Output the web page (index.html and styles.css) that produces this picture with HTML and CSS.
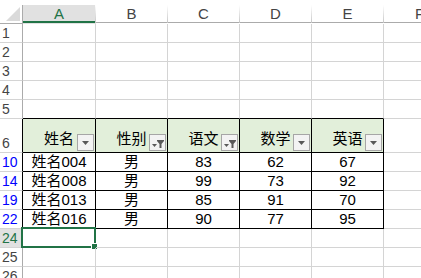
FILE: index.html
```html
<!DOCTYPE html>
<html lang="zh-CN">
<head>
    <meta charset="UTF-8">
    <title>工作表</title>
    <link rel="stylesheet" href="styles.css">
</head>
<body>
    <div class="sheet">
        <div class="top-strip"></div>

        <div class="row head">
            <div class="corner"><span class="tri"></span></div>
            <div class="col active">A</div>
            <div class="col">B</div>
            <div class="col">C</div>
            <div class="col">D</div>
            <div class="col">E</div>
            <div class="col">F</div>
        </div>

        <div class="row"><div class="num">1</div><div class="cell"></div><div class="cell"></div><div class="cell"></div><div class="cell"></div><div class="cell"></div><div class="cell"></div></div>
        <div class="row"><div class="num">2</div><div class="cell"></div><div class="cell"></div><div class="cell"></div><div class="cell"></div><div class="cell"></div><div class="cell"></div></div>
        <div class="row"><div class="num">3</div><div class="cell"></div><div class="cell"></div><div class="cell"></div><div class="cell"></div><div class="cell"></div><div class="cell"></div></div>
        <div class="row"><div class="num">4</div><div class="cell"></div><div class="cell"></div><div class="cell"></div><div class="cell"></div><div class="cell"></div><div class="cell"></div></div>
        <div class="row"><div class="num">5</div><div class="cell above"></div><div class="cell above"></div><div class="cell above"></div><div class="cell above"></div><div class="cell above"></div><div class="cell"></div></div>

        <div class="row tall">
            <div class="num edge">6</div>
            <div class="cell th">姓名<span class="filter"><svg width="15" height="15" viewBox="0 0 15 15"><path d="M4 6h7l-3.5 4z" fill="#595959"/></svg></span></div>
            <div class="cell th">性别<span class="filter"><svg width="15" height="15" viewBox="0 0 15 15"><path d="M2 9h5l-2.5 3z" fill="#595959"/><path d="M7 5h7v1l-2.5 3v4h-2v-4l-2.5-3z" fill="#595959"/></svg></span></div>
            <div class="cell th">语文<span class="filter"><svg width="15" height="15" viewBox="0 0 15 15"><path d="M2 9h5l-2.5 3z" fill="#595959"/><path d="M7 5h7v1l-2.5 3v4h-2v-4l-2.5-3z" fill="#595959"/></svg></span></div>
            <div class="cell th">数学<span class="filter"><svg width="15" height="15" viewBox="0 0 15 15"><path d="M4 6h7l-3.5 4z" fill="#595959"/></svg></span></div>
            <div class="cell th">英语<span class="filter"><svg width="15" height="15" viewBox="0 0 15 15"><path d="M4 6h7l-3.5 4z" fill="#595959"/></svg></span></div>
            <div class="cell"></div>
        </div>

        <div class="row"><div class="num edge hit">10</div><div class="cell td">姓名004</div><div class="cell td">男</div><div class="cell td">83</div><div class="cell td">62</div><div class="cell td">67</div><div class="cell"></div></div>
        <div class="row"><div class="num edge hit">14</div><div class="cell td">姓名008</div><div class="cell td">男</div><div class="cell td">99</div><div class="cell td">73</div><div class="cell td">92</div><div class="cell"></div></div>
        <div class="row"><div class="num edge hit">19</div><div class="cell td">姓名013</div><div class="cell td">男</div><div class="cell td">85</div><div class="cell td">91</div><div class="cell td">70</div><div class="cell"></div></div>
        <div class="row"><div class="num edge hit">22</div><div class="cell td">姓名016</div><div class="cell td">男</div><div class="cell td">90</div><div class="cell td">77</div><div class="cell td">95</div><div class="cell"></div></div>

        <div class="row"><div class="num current">24</div><div class="cell selected"><span class="sel"><span class="handle"></span></span></div><div class="cell"></div><div class="cell"></div><div class="cell"></div><div class="cell"></div><div class="cell"></div></div>
        <div class="row"><div class="num">25</div><div class="cell"></div><div class="cell"></div><div class="cell"></div><div class="cell"></div><div class="cell"></div><div class="cell"></div></div>
        <div class="row"><div class="num">26</div><div class="cell"></div><div class="cell"></div><div class="cell"></div><div class="cell"></div><div class="cell"></div><div class="cell"></div></div>
    </div>
</body>
</html>
```

FILE: styles.css
```css
* {
    box-sizing: border-box;
}
body {
    margin: 0;
    background-color: #fff;
    overflow: hidden;
    font-family: 'Liberation Sans', 'Noto Sans CJK SC', sans-serif;
    font-size: 15px;
    color: #000;
}
.sheet {
    width: 456px;
}
.top-strip {
    height: 5px;
}
.row {
    display: grid;
    grid-template-columns: 23px 73px 72px 72px 72px 72px 72px;
    height: 19px;
}
.row.tall {
    height: 34px;
}

/* column header */
.head .corner {
    position: relative;
    border-right: 1px solid #ababab;
    border-bottom: 1px solid #ababab;
}
.corner .tri {
    position: absolute;
    right: 2px;
    bottom: 2px;
    width: 0;
    height: 0;
    border-left: 14px solid transparent;
    border-bottom: 14px solid #dadada;
}
.head .col {
    display: flex;
    justify-content: center;
    align-items: center;
    color: #444;
    border-bottom: 1px solid #ababab;
    border-right: 1px solid transparent;
    border-image: linear-gradient(to bottom, #fff, #c6c6c6) 0 1 0 0;
    border-image-outset: 0;
    line-height: 18px;
}
.head .col {
    box-shadow: inset 0 -1px 0 #ababab;
}
.head .col.active {
    background-color: #e1e1e1;
    color: #217346;
    box-shadow: inset 0 -2px 0 #217346;
}

/* row header */
.num {
    display: flex;
    align-items: center;
    padding-left: 2px;
    font-size: 14px;
    color: #444;
    border-right: 1px solid #ababab;
    border-bottom: 1px solid #d4d4d4;
}
.tall .num {
    align-items: flex-end;
    padding-bottom: 1px;
}
.num.edge {
    border-right-color: #000;
}
.num.hit {
    color: #0000ff;
}
.num.current {
    background-color: #e1e1e1;
    color: #217346;
    border-right: 2px solid #217346;
}

/* cells */
.cell {
    position: relative;
    border-right: 1px solid #d4d4d4;
    border-bottom: 1px solid #d4d4d4;
}
.cell.above {
    border-bottom-color: #000;
}
.cell.th,
.cell.td {
    display: flex;
    justify-content: center;
    border-right-color: #000;
    border-bottom-color: #000;
}
.cell.th {
    align-items: flex-end;
    padding-bottom: 4px;
    background-color: #e2efda;
    line-height: 19px;
}
.cell.td {
    align-items: center;
    line-height: 18px;
}
.filter {
    position: absolute;
    right: 1px;
    bottom: 1px;
    width: 17px;
    height: 17px;
    border: 1px solid #a6a6a6;
    background-color: #f3f3f3;
    display: flex;
}
.filter svg {
    display: block;
}

/* selection */
.sel {
    position: absolute;
    left: -2px;
    top: -2px;
    right: -1px;
    bottom: -1px;
    border: 2px solid #217346;
}
.handle {
    position: absolute;
    right: -4px;
    bottom: -4px;
    width: 7px;
    height: 7px;
    background-color: #217346;
    border: 1px solid #fff;
}
```
